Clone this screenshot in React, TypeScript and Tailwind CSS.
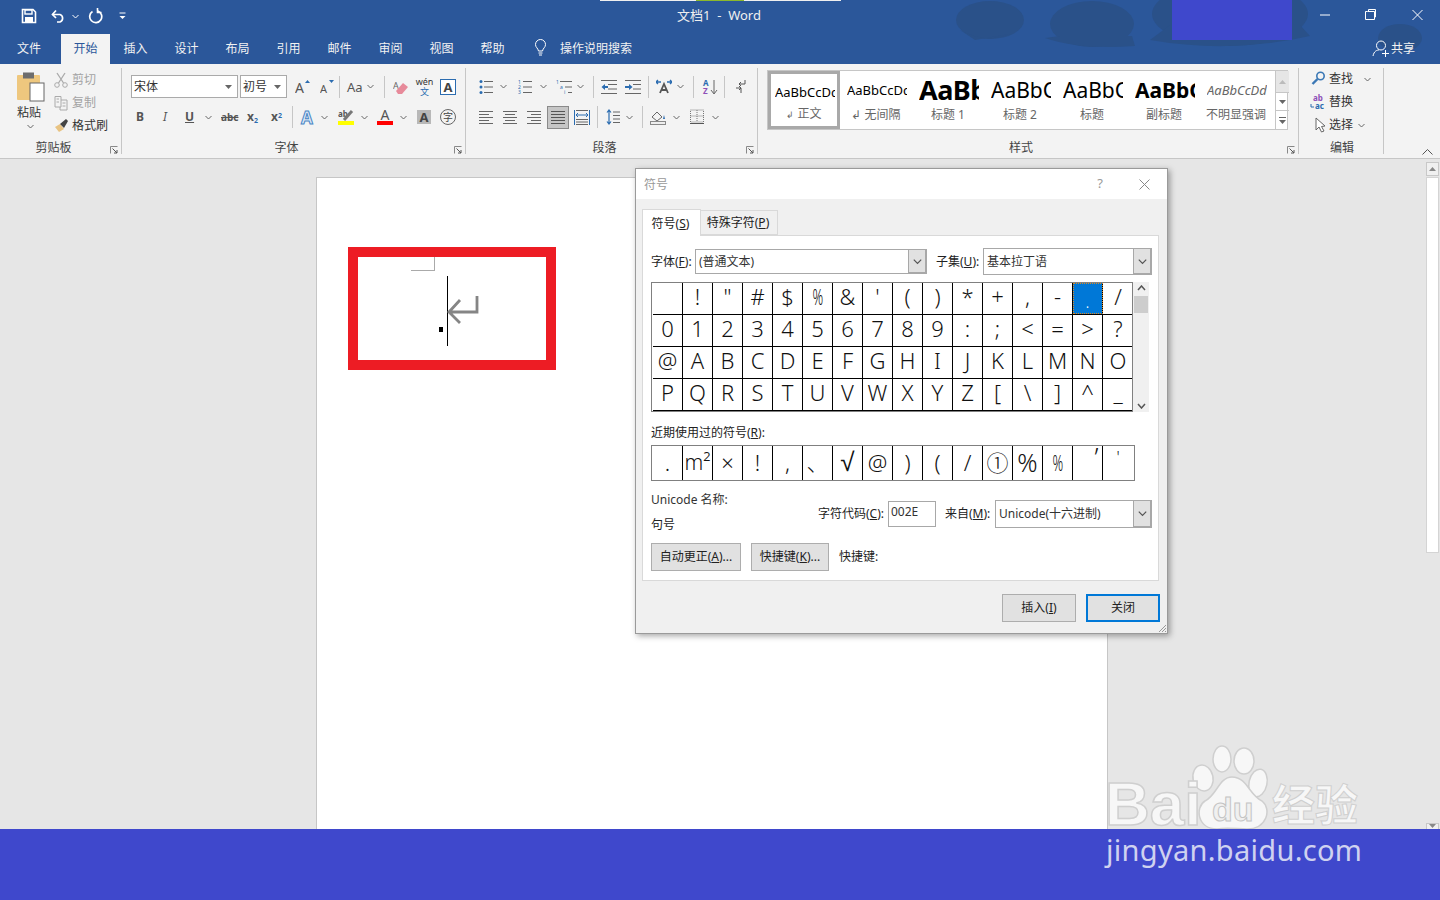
import React from "react";

const FONT = "font-['Noto_Sans','Noto_Sans_CJK_SC',sans-serif]";

function Chev({ className = "", color = "#666" }: { className?: string; color?: string }) {
  return (
    <svg width="7" height="5" viewBox="0 0 7 5" className={"shrink-0 " + className}>
      <path d="M0.5 1 L3.5 4 L6.5 1" fill="none" stroke={color} strokeWidth="1" />
    </svg>
  );
}
function Sep({ className = "", h = "h-[22px]" }: { className?: string; h?: string }) {
  return <div className={`w-px ${h} bg-[#c6c6c6] shrink-0 ${className}`} />;
}
function Launcher() {
  return (
    <svg width="8" height="8" viewBox="0 0 8 8" className="absolute right-[3px] bottom-[0px]">
      <path d="M0.5 7.5V0.5H7.5" fill="none" stroke="#888" />
      <path d="M2.5 2.5L7 7M7 4V7H4" fill="none" stroke="#555" />
    </svg>
  );
}
function Lines({ x1, x2, ys, color = "#666" }: { x1: number[]; x2: number[]; ys: number[]; color?: string }) {
  return (
    <>
      {ys.map((y, i) => (
        <path key={i} d={`M${x1[i % x1.length]} ${y}H${x2[i % x2.length]}`} stroke={color} strokeWidth="1" />
      ))}
    </>
  );
}
function Ico({ w, h = 16, className = "", children }: { w: number; h?: number; className?: string; children: React.ReactNode }) {
  return (
    <svg width={w} height={h} viewBox={`0 0 ${w} ${h}`} className={"shrink-0 " + className}>
      {children}
    </svg>
  );
}

const tabs = ["插入", "设计", "布局", "引用", "邮件", "审阅", "视图", "帮助"];

function TitleBar() {
  return (
    <div className="relative h-[64px] bg-[#2b579a] shrink-0 overflow-hidden text-white">
      <svg width="1440" height="64" className="absolute left-0 top-0">
        <g fill="#2a5189">
          <ellipse cx="990" cy="20" rx="34" ry="19" />
          <path d="M960 30 Q985 44 1010 34 L975 40Z" />
          <ellipse cx="1092" cy="24" rx="42" ry="23" />
          <path d="M1045 38 Q1080 50 1135 46 L1132 36 L1060 36Z" />
          <ellipse cx="1230" cy="14" rx="78" ry="32" />
          <path d="M1150 40 Q1230 54 1310 36 L1300 25 L1170 25Z" />
          <ellipse cx="1400" cy="38" rx="22" ry="14" />
        </g>
      </svg>
      <div className="absolute left-[600px] top-0 w-[241px] h-px bg-[#f0f0f0]" />
      <div className="absolute left-[696px] top-0 w-[48px] h-px bg-[#8cb82b]" />
      <div className="absolute left-[1172px] top-0 w-[120px] h-[40px] bg-[#3f48cc]" />

      <div className="relative h-[32px] flex items-center">
        <Ico w={16} className="ml-[21px]">
          <path d="M1.5 1.5H12L14.5 4V14.5H1.5Z" fill="none" stroke="#fff" strokeWidth="1.6" />
          <rect x="4" y="2" width="7" height="4" fill="none" stroke="#fff" strokeWidth="1.4" />
          <rect x="4" y="9" width="8" height="5" fill="#fff" />
        </Ico>
        <Ico w={15} className="ml-[14px]">
          <path d="M1.5 6.5 H9 A4 4 0 0 1 9 14 H6" fill="none" stroke="#fff" strokeWidth="1.7" />
          <path d="M5 2.5 L1.5 6.5 L5 10" fill="none" stroke="#fff" strokeWidth="1.7" />
        </Ico>
        <Chev className="ml-[6px]" color="#fff" />
        <Ico w={15} className="ml-[9px]">
          <path d="M4.5 3.5 A6 6 0 1 0 10 3" fill="none" stroke="#fff" strokeWidth="1.7" />
          <path d="M10.5 1 V5.5 H14.5" fill="none" stroke="#fff" strokeWidth="1.6" transform="translate(-1,-1)" />
        </Ico>
        <Ico w={7} h={8} className="ml-[16px]">
          <path d="M0.5 1H6.5" stroke="#fff" />
          <path d="M0.5 4H6.5L3.5 7Z" fill="#fff" />
        </Ico>
      </div>
      <div className={`absolute left-[677px] top-[7px] text-[13px] leading-[17px] text-[#f0f0f0] whitespace-pre ${FONT}`}>文档1  -  Word</div>
      <Ico w={16} className="absolute left-[1320px] top-[7px]"><path d="M0 8H10" stroke="#fff" /></Ico>
      <Ico w={16} className="absolute left-[1365px] top-[7px]">
        <path d="M2.5 5.5H9.5V13.5H0.5V5.5Z" fill="none" stroke="#fff" transform="translate(0,-1)" />
        <path d="M3.5 4.5V2.5H10.5V10H9" fill="none" stroke="#fff" />
      </Ico>
      <Ico w={16} className="absolute left-[1412px] top-[7px]"><path d="M0.5 3 L10.5 13 M10.5 3 L0.5 13" stroke="#fff" /></Ico>

      <div className={`relative h-[32px] flex items-end text-[12px] leading-[30px] text-[#f2f2f2] ${FONT}`}>
        <div className="w-[61px] h-[30px] text-center pr-[3px]">文件</div>
        <div className="w-[49px] h-[30px] text-center bg-[#f3f3f3] text-[#2b579a]">开始</div>
        {tabs.map((t) => (
          <div key={t} className="w-[51px] h-[30px] text-center">{t}</div>
        ))}
        <Ico w={16} h={18} className="ml-[15px] mb-[7px]">
          <path d="M5.5 12 C5 9 2.5 8.5 2.5 5.5 A5 5 0 0 1 12.5 5.5 C12.5 8.5 10 9 9.5 12 Z" fill="none" stroke="#fff" />
          <path d="M5.5 14H9.5M6 16H9" stroke="#fff" />
        </Ico>
        <div className="ml-[11px] w-[80px]">操作说明搜索</div>
        <Ico w={20} h={20} className="ml-[732px] mb-[5px]">
          <circle cx="9" cy="6.5" r="4.5" fill="none" stroke="#fff" />
          <path d="M1 17 C2 12 5 11 7 11" fill="none" stroke="#fff" />
          <path d="M10 14.5H17M13.5 11V18" stroke="#fff" />
        </Ico>
        <div className="w-[30px] ml-[-1px] h-[30px] whitespace-nowrap">共享</div>
      </div>
    </div>
  );
}

function Group({ w, label, launcher = true, labelClass = "", children }: { w: number; label: string; launcher?: boolean; labelClass?: string; children: React.ReactNode }) {
  return (
    <div style={{ width: w }} className="relative h-[86px] border-r border-[#c6c6c6] shrink-0 flex flex-col">
      <div className="flex-1 min-h-0">{children}</div>
      <div className={`h-[18px] mb-[-3px] text-center text-[12px] leading-[18px] text-[#444] ${labelClass}`}>{label}</div>
      {launcher && <Launcher />}
    </div>
  );
}

function SmallSelect({ w, text }: { w: number; text: string }) {
  return (
    <div style={{ width: w }} className="h-[23px] bg-white border border-[#aaa] flex items-center pl-[2px] pr-[5px] text-[12px] text-[#333] shrink-0">
      <span className="flex-1">{text}</span>
      <svg width="7" height="4" viewBox="0 0 7 4"><path d="M0 0H7L3.5 4Z" fill="#666" /></svg>
    </div>
  );
}

function Clipboard() {
  return (
    <Group w={122} label="剪贴板" labelClass="pr-[14px]">
      <div className="flex pt-[3px] pl-[16px] h-full">
        <div className="w-[28px] flex flex-col items-center">
          <Ico w={29} h={31}>
            <rect x="1" y="4" width="23" height="25" rx="1" fill="#eec77e" />
            <rect x="7" y="1.5" width="11" height="6" fill="#6d6d6d" />
            <rect x="14" y="12" width="14" height="18" fill="#fff" stroke="#666" />
          </Ico>
          <div className="mt-[3px] text-[12px] leading-[16px] text-[#333] whitespace-nowrap pr-[2px]">粘贴</div>
          <Chev className="mt-[3px]" />
        </div>
        <div className="ml-[10px] flex flex-col gap-[7px] pt-[1px] text-[12px] leading-[16px]">
          <div className="flex items-center text-[#a3a3a3] h-[16px]">
            <Ico w={14}><path d="M3 1L9.5 11M11 1L4.5 11" stroke="#aaa" strokeWidth="1.3" /><circle cx="3" cy="13" r="2.3" fill="none" stroke="#aaa" /><circle cx="11" cy="13" r="2.3" fill="none" stroke="#aaa" /></Ico>
            <span className="ml-[4px]">剪切</span>
          </div>
          <div className="flex items-center text-[#a3a3a3] h-[16px]">
            <Ico w={14}><path d="M1 1.5H7V12H1Z M7 5H13V15H6V12" fill="none" stroke="#aaa" /><path d="M2.5 4H5M2.5 7H5M8.5 8H11.5M8.5 11H11.5" stroke="#aaa" /></Ico>
            <span className="ml-[4px]">复制</span>
          </div>
          <div className="flex items-center text-[#333] h-[16px]">
            <Ico w={14}><path d="M1 9 L6 6 L10 11 L5 14 Z" fill="#e8c382" /><path d="M6 6 L12 1 L14 3 L10 10Z" fill="#444" /></Ico>
            <span className="ml-[4px]">格式刷</span>
          </div>
        </div>
      </div>
    </Group>
  );
}

function FontGroup() {
  return (
    <Group w={344} label="字体" labelClass="pr-[14px]">
      <div className="flex items-center h-[25px] mt-[6px]">
        <div className="ml-[9px]"><SmallSelect w={107} text="宋体" /></div>
        <div className="ml-[2px]"><SmallSelect w={47} text="初号" /></div>
        <Ico w={15} className="ml-[8px]"><text x="0" y="14" fontSize="14" fill="#555" fontFamily="Noto Sans">A</text><path d="M10 4L12.5 1L15 4Z" fill="#2b6cb0" /></Ico>
        <Ico w={14} className="ml-[10px]"><text x="0" y="14" fontSize="11" fill="#555" fontFamily="Noto Sans">A</text><path d="M9 1H14L11.5 4Z" fill="#2b6cb0" /></Ico>
        <Sep className="ml-[5px]" />
        <span className="ml-[7px] w-[15px] text-[13px] leading-[16px] text-[#555] whitespace-nowrap">Aa</span>
        <Chev className="ml-[5px]" />
        <Sep className="ml-[10px]" />
        <Ico w={16} className="ml-[8px]"><text x="0" y="10" fontSize="9" fill="#666" fontFamily="Noto Sans">A</text><path d="M3 12L10 4L15 8L9 15H5Z" fill="#e78a9a" /></Ico>
        <div className="ml-[7px] w-[17px] flex flex-col items-center text-[9px] leading-[10px]">
          <span className="text-[#333]">wén</span>
          <span className="text-[#2b6cb0]">文</span>
        </div>
        <div className="ml-[7px] w-[16px] h-[16px] border border-[#2b6cb0] text-[13px] leading-[14px] font-bold text-[#444] text-center bg-white">A</div>
      </div>
      <div className="flex items-center h-[24px] mt-[6px] text-[#555]">
        <span className="ml-[14px] w-[9px] text-[12px] font-bold leading-none">B</span>
        <span className="ml-[18px] w-[9px] text-[12px] italic leading-none">I</span>
        <span className="ml-[13px] w-[9px] text-[12px] font-bold underline leading-none">U</span>
        <Chev className="ml-[11px]" />
        <span className="ml-[9px] w-[16px] text-[10px] font-bold line-through leading-none">abc</span>
        <span className="ml-[10px] w-[11px] text-[12px] font-bold leading-none">x<sub className="text-[7px] text-[#2b6cb0]">2</sub></span>
        <span className="ml-[13px] w-[12px] text-[12px] font-bold leading-none">x<sup className="text-[7px] text-[#2b6cb0]">2</sup></span>
        <Sep className="ml-[9px]" />
        <span className="ml-[8px] w-[14px] text-[17px] font-bold leading-none text-[#dfeaf7] [-webkit-text-stroke:1px_#4a86c5]">A</span>
        <Chev className="ml-[6px]" />
        <div className="ml-[10px] w-[16px] flex flex-col items-center">
          <Ico w={16} h={12}><text x="0" y="8" fontSize="8" fill="#555" fontWeight="700" fontFamily="Noto Sans">ab</text><path d="M6 11L14 2" stroke="#777" strokeWidth="3" /></Ico>
          <div className="w-[16px] h-[4px] bg-[#ffff00]" />
        </div>
        <Chev className="ml-[7px]" />
        <div className="ml-[9px] w-[16px] flex flex-col items-center">
          <span className="text-[14px] leading-[12px] text-[#555]">A</span>
          <div className="w-[16px] h-[4px] bg-[#ff0000]" />
        </div>
        <Chev className="ml-[7px]" />
        <div className="ml-[10px] w-[14px] h-[14px] bg-[#b8b8b8] text-[13px] leading-[14px] font-bold text-center text-[#444]">A</div>
        <div className="ml-[9px] w-[16px] h-[16px] rounded-full border border-[#666] text-[10px] leading-[14px] text-center text-[#444]">字</div>
      </div>
    </Group>
  );
}

function ParagraphGroup() {
  const b = "#2b6cb0";
  return (
    <Group w={292} label="段落" labelClass="pr-[14px]">
      <div className="flex items-center h-[25px] mt-[6px]">
        <Ico w={14} className="ml-[13px]"><circle cx="2" cy="2.5" r="1.5" fill={b} /><circle cx="2" cy="8" r="1.5" fill={b} /><circle cx="2" cy="13.5" r="1.5" fill={b} /><Lines x1={[5]} x2={[14]} ys={[2.5, 8, 13.5]} /></Ico>
        <Chev className="ml-[7px]" />
        <Ico w={14} className="ml-[11px]"><text x="0" y="5" fontSize="5" fill={b}>1</text><text x="0" y="10" fontSize="5" fill={b}>2</text><text x="0" y="15" fontSize="5" fill={b}>3</text><Lines x1={[5]} x2={[14]} ys={[2.5, 8, 13.5]} /></Ico>
        <Chev className="ml-[8px]" />
        <Ico w={16} className="ml-[9px]"><text x="0" y="5" fontSize="5" fill={b}>1</text><text x="4" y="10" fontSize="5" fill={b}>a</text><text x="8" y="15" fontSize="5" fill={b}>i</text><Lines x1={[4, 9, 12]} x2={[16]} ys={[2.5, 8, 13.5]} /></Ico>
        <Chev className="ml-[5px]" />
        <Sep className="ml-[9px]" />
        <Ico w={16} className="ml-[7px]"><Lines x1={[0, 7, 7, 0]} x2={[16]} ys={[1.5, 5.5, 10, 14.5]} /><path d="M0.5 8L4 5V7H7V9H4V11Z" fill={b} /></Ico>
        <Ico w={16} className="ml-[8px]"><Lines x1={[0, 8, 8, 0]} x2={[16]} ys={[1.5, 5.5, 10, 14.5]} /><path d="M7.5 8L4 5V7H0V9H4V11Z" fill={b} /></Ico>
        <Sep className="ml-[7px]" />
        <Ico w={16} className="ml-[7px]"><path d="M4 14L8 5L12 14M5.5 11H10.5" fill="none" stroke="#555" strokeWidth="1.8" /><path d="M0 3H5M2 1L0 3L2 5M16 3H11M14 1L16 3L14 5" fill="none" stroke={b} strokeWidth="1.3" /></Ico>
        <Chev className="ml-[5px]" />
        <Sep className="ml-[9px]" />
        <Ico w={16} className="ml-[8px]"><text x="1" y="7" fontSize="8" fill={b} fontWeight="700">A</text><text x="1" y="15" fontSize="8" fill="#8e4fb8" fontWeight="700">Z</text><path d="M12 1V14M9 11L12 15L15 11" fill="none" stroke="#666" /></Ico>
        <Sep className="ml-[6px]" />
        <Ico w={11} className="ml-[10px]"><path d="M10 1V5H4M6 3L4 5L6 7M1 9H6M4 7L6 9L4 11M6 9V14" fill="none" stroke="#555" /></Ico>
      </div>
      <div className="flex items-center h-[24px] mt-[6px]">
        <Ico w={14} className="ml-[13px]"><Lines x1={[0]} x2={[14, 10]} ys={[2.5, 5.5, 8.5, 11.5, 14.5]} /></Ico>
        <Ico w={14} className="ml-[10px]"><Lines x1={[0, 2]} x2={[14, 12]} ys={[2.5, 5.5, 8.5, 11.5, 14.5]} /></Ico>
        <Ico w={14} className="ml-[10px]"><Lines x1={[0, 4]} x2={[14]} ys={[2.5, 5.5, 8.5, 11.5, 14.5]} /></Ico>
        <div className="ml-[6px] w-[22px] h-[23px] bg-[#c6c6c6] border border-[#8a8a8a] flex items-center justify-center">
          <Ico w={14}><Lines x1={[0]} x2={[14]} ys={[2.5, 5.5, 8.5, 11.5, 14.5]} color="#555" /></Ico>
        </div>
        <Ico w={16} className="ml-[5px]"><Lines x1={[2]} x2={[14]} ys={[1.5, 10.5, 13, 15.5]} /><path d="M0.5 1V16M15.5 1V16" stroke={b} /><path d="M2 6H14M2 6L4 4M2 6L4 8M14 6L12 4M14 6L12 8" fill="none" stroke={b} /></Ico>
        <Sep className="ml-[7px]" />
        <Ico w={14} className="ml-[8px]"><path d="M3 1V15M1 3.5L3 1L5 3.5M1 12.5L3 15L5 12.5" fill="none" stroke={b} strokeWidth="1.2" /><Lines x1={[7]} x2={[14]} ys={[3, 6.5, 10, 13.5]} /></Ico>
        <Chev className="ml-[6px]" />
        <Sep className="ml-[9px]" />
        <Ico w={16} className="ml-[7px]"><path d="M2 8L7 3L12 8L7 12Z" fill="none" stroke="#666" /><path d="M14 6L15 10H13Z" fill={b} /><rect x="0.5" y="12.5" width="15" height="3" fill="#eee" stroke="#888" /></Ico>
        <Chev className="ml-[7px]" />
        <Ico w={14} className="ml-[10px]"><path d="M0.5 1H13.5V13H0.5ZM7 1V13M0.5 7H13.5" fill="none" stroke="#777" strokeDasharray="1 1" /><path d="M0 14.5H14" stroke="#555" /></Ico>
        <Chev className="ml-[8px]" />
      </div>
    </Group>
  );
}

const styles = [
  { s: "AaBbCcDd", l: "↲ 无间隔", c: "text-[13px] text-black" },
  { s: "AaBb", l: "标题 1", c: "text-[27px] font-bold tracking-[-0.5px] text-black" },
  { s: "AaBbC", l: "标题 2", c: "text-[21px] text-black" },
  { s: "AaBbC", l: "标题", c: "text-[21px] text-black" },
  { s: "AaBbC", l: "副标题", c: "text-[21px] font-bold text-black" },
  { s: "AaBbCcDd", l: "不明显强调", c: "text-[13px] italic text-[#666]" },
];

function StylesGroup() {
  return (
    <Group w={541} label="样式" labelClass="pr-[14px]">
      <div className="ml-[9px] mt-[2px] w-[521px] h-[60px] bg-white border border-[#c6c6c6] flex">
        <div className="w-[72px] h-[58px] border-[3px] border-[#a9a9a9] flex flex-col items-center shrink-0">
          <div className="w-[60px] ml-[2px] overflow-hidden mt-[6px] h-[24px] text-[13px] leading-[24px] whitespace-nowrap text-black">AaBbCcDd</div>
          <div className="mt-[2px] text-[12px] leading-[16px] text-[#666] whitespace-nowrap"><span className="text-[9px] mr-[3px]">↲</span>正文</div>
        </div>
        {styles.map((s, i) => (
          <div key={i} className="w-[72px] flex flex-col items-center shrink-0">
            <div className={`w-[60px] ml-[2px] overflow-hidden mt-[4px] h-[30px] leading-[30px] whitespace-nowrap ${s.c}`}>{s.s}</div>
            <div className="mt-[2px] text-[12px] leading-[16px] text-[#666] whitespace-nowrap">{s.l}</div>
          </div>
        ))}
        <div className="w-[14px] ml-[3px] border-l border-[#c6c6c6] flex flex-col shrink-0">
          <div className="h-[21px] bg-[#e6e6e6] flex items-center justify-center"><svg width="7" height="4"><path d="M0 4H7L3.5 0Z" fill="#bbb" /></svg></div>
          <div className="h-[19px] border-y border-[#c6c6c6] flex items-center justify-center"><svg width="7" height="4"><path d="M0 0H7L3.5 4Z" fill="#666" /></svg></div>
          <div className="h-[18px] flex flex-col items-center justify-center gap-[2px]"><div className="w-[7px] h-px bg-[#666]" /><svg width="7" height="4"><path d="M0 0H7L3.5 4Z" fill="#666" /></svg></div>
        </div>
      </div>
    </Group>
  );
}

function EditGroup() {
  return (
    <Group w={85} label="编辑" launcher={false} labelClass="pl-[2px]">
      <div className="flex flex-col gap-[7px] pl-[12px] pt-[3px] text-[12px] leading-[16px] text-[#333]">
        <div className="flex items-center h-[16px]">
          <Ico w={14}><circle cx="9.5" cy="5" r="3.7" fill="none" stroke="#3b78b5" strokeWidth="1.6" /><path d="M6.5 8L1.5 13" stroke="#3b78b5" strokeWidth="2.4" /></Ico>
          <span className="ml-[4px]">查找</span>
          <Chev className="ml-[11px]" />
        </div>
        <div className="flex items-center h-[16px]">
          <Ico w={16} className="ml-[-1px]"><text x="3" y="7" fontSize="8" fontWeight="700" fill="#8e4fb8" fontFamily="Noto Sans">ab</text><text x="5" y="15" fontSize="8" fontWeight="700" fill="#2b6cb0" fontFamily="Noto Sans">ac</text><path d="M1 10V13H4" fill="none" stroke="#2b6cb0" /></Ico>
          <span className="ml-[3px]">替换</span>
        </div>
        <div className="flex items-center h-[16px]">
          <Ico w={14} className="ml-[3px]"><path d="M2 1L2 13L5 10L7.5 15L10 14L7.5 9.5L11 9Z" fill="#fff" stroke="#666" /></Ico>
          <span className="ml-[1px]">选择</span>
          <Chev className="ml-[5px]" />
        </div>
      </div>
    </Group>
  );
}

const Row = ({ chars, selected }: { chars: string[]; selected?: string }) => (
  <div className="flex h-[32px] border-b border-black">
    {chars.map((c, i) => (
      <div key={i} className={`w-[30px] shrink-0 flex items-center justify-center pb-[6px] border-r border-black last:border-r-0 text-[22px] font-light leading-none ${c === selected ? "bg-[#0078d7] text-white outline-1 outline-dotted -outline-offset-1 outline-[#e08a1e]" : "text-[#111]"}`}>
        {c === "." && selected ? <span className="text-[16px] mt-[12px]">.</span> : c === "%" ? <span className="inline-block scale-x-[0.6]">%</span> : c}
      </div>
    ))}
  </div>
);

const rows = [
  " !\"#$%&'()*+,-./".split(""),
  "0123456789:;<=>?".split(""),
  "@ABCDEFGHIJKLMNO".split(""),
  "PQRSTUVWXYZ[\\]^_".split(""),
];
const recent = [".", "m²", "×", "!", ",", "、", "√", "@", ")", "(", "/", "①", "%", "%", "’", "'"];

function U({ children }: { children: React.ReactNode }) {
  return <span className="underline">{children}</span>;
}

function DialogSelect({ w, h, text, arrowW = 18 }: { w: number; h: number; text: string; arrowW?: number }) {
  return (
    <div style={{ width: w, height: h }} className="bg-white border border-[#a8a8a8] flex items-center shrink-0">
      <span className="flex-1 pl-[3px] text-[12px] text-[#333] whitespace-nowrap overflow-hidden">{text}</span>
      <div style={{ width: arrowW }} className="h-full bg-[#e1e1e1] border-l border-[#a8a8a8] border-r border-b flex items-center justify-center">
        <Chev color="#555" className="scale-125" />
      </div>
    </div>
  );
}

function Btn({ w, primary, children }: { w: number; primary?: boolean; children: React.ReactNode }) {
  return (
    <div style={{ width: w }} className={`h-[28px] bg-[#e1e1e1] flex items-center justify-center text-[12px] text-[#222] whitespace-nowrap ${primary ? "border-2 border-[#0078d7]" : "border border-[#adadad]"}`}>
      {children}
    </div>
  );
}

function SymbolDialog() {
  return (
    <div className="absolute left-[635px] top-[168px] w-[533px] h-[466px] bg-[#f0f0f0] border border-[#9a9a9a] shadow-[2px_2px_6px_rgba(0,0,0,0.35)] flex flex-col text-[12px] text-[#222]">
      <div className="h-[30px] bg-white flex items-center shrink-0 relative">
        <span className="ml-[8px] mt-[1px] text-[12px] text-[#999]">符号</span>
        <span className="ml-auto mr-[36px] text-[13px] text-[#999]">?</span>
        <svg width="11" height="11" className="mr-[17px]"><path d="M0.5 0.5L10.5 10.5M10.5 0.5L0.5 10.5" stroke="#888" /></svg>
      </div>
      <div className="flex-1 px-[6px] pt-[10px] flex flex-col">
        <div className="flex items-end h-[27px] relative z-10">
          <div className="w-[59px] h-[27px] pt-[1px] pr-[2px] bg-white border border-[#d9d9d9] border-b-0 flex items-center justify-center">符号(<U>S</U>)</div>
          <div className="w-[77px] h-[25px] mb-[1px] pt-[1px] pr-[2px] bg-[#f0f0f0] border border-[#d9d9d9] border-l-0 flex items-center justify-center">特殊字符(<U>P</U>)</div>
        </div>
        <div className="w-[517px] h-[346px] mt-[-1px] bg-white border border-[#d9d9d9] pl-[8px] flex flex-col">
          <div className="flex items-center mt-[12px] h-[27px]">
            <span className="w-[44px] whitespace-nowrap">字体(<U>F</U>):</span>
            <DialogSelect w={232} h={25} text="(普通文本)" />
            <span className="ml-[9px] w-[47px] whitespace-nowrap">子集(<U>U</U>):</span>
            <DialogSelect w={169} h={27} text="基本拉丁语" />
          </div>
          <div className="flex mt-[7px]">
            <div className="w-[482px] h-[130px] border border-[#808080] pl-px overflow-hidden shrink-0">
              {rows.map((r, i) => <Row key={i} chars={r} selected="." />)}
            </div>
            <div className="w-[16px] h-[130px] bg-[#f0f0f0] flex flex-col items-center shrink-0">
              <svg width="9" height="6" className="mt-[3px]"><path d="M1 5L4.5 1L8 5" fill="none" stroke="#555" strokeWidth="1.5" /></svg>
              <div className="w-[14px] h-[17px] bg-[#cdcdcd] mt-[5px]" />
              <svg width="9" height="6" className="mt-auto mb-[3px]"><path d="M1 1L4.5 5L8 1" fill="none" stroke="#555" strokeWidth="1.5" /></svg>
            </div>
          </div>
          <div className="mt-[13px] h-[16px] leading-[16px]">近期使用过的符号(<U>R</U>):</div>
          <div className="mt-[4px] w-[484px] h-[36px] border border-[#808080] pl-px overflow-hidden flex">
            {recent.map((c, i) => (
              <div key={i} className={`w-[30px] shrink-0 flex items-center justify-center pb-[2px] border-r border-black last:border-r-0 leading-none font-light text-[#111] ${i === 6 ? "text-[26px] font-['Liberation_Sans',sans-serif]" : i === 14 ? "text-[26px] font-bold pb-[14px] pl-[18px]" : i === 15 ? "text-[16px] pb-[12px]" : i === 1 ? "text-[21px]" : i === 12 ? "text-[25px]" : "text-[22px]"}`}>
                {i === 13 ? <span className="inline-block scale-x-[0.6]">{c}</span> : c}
              </div>
            ))}
          </div>
          <div className="flex mt-[8px] h-[55px]">
            <div className="w-[167px] shrink-0 flex flex-col">
              <span className="h-[16px] leading-[16px] mt-[3px] text-[#333]">Unicode 名称:</span>
              <span className="h-[16px] leading-[16px] mt-[9px]">句号</span>
            </div>
            <div className="flex items-center h-[38px] mt-[6px]">
              <span className="whitespace-nowrap w-[70px]">字符代码(<U>C</U>):</span>
              <div className="w-[48px] h-[26px] border border-[#a8a8a8] pl-[2px] leading-[20px] text-[#333]">002E</div>
              <span className="ml-[9px] w-[50px] whitespace-nowrap">来自(<U>M</U>):</span>
              <DialogSelect w={157} h={28} text="Unicode(十六进制)" />
            </div>
          </div>
          <div className="flex items-center mt-[-1px]">
            <Btn w={90}>自动更正(<U>A</U>)...</Btn>
            <div className="w-[10px]" />
            <Btn w={78}>快捷键(<U>K</U>)...</Btn>
            <span className="ml-[10px]">快捷键:</span>
          </div>
        </div>
        <div className="flex justify-end mt-[13px] gap-[10px] mr-[1px]">
          <Btn w={74}>插入(<U>I</U>)</Btn>
          <Btn w={74} primary>关闭</Btn>
        </div>
      </div>
      <svg width="10" height="10" className="absolute right-0 bottom-0"><path d="M9 2L2 9M9 5L5 9M9 8L8 9" stroke="#999" /></svg>
    </div>
  );
}

function Watermark() {
  return (
    <div className={`absolute left-[1107px] top-[745px] w-[260px] h-[84px] overflow-hidden ${FONT}`}>
      <svg width="260" height="84" className="absolute left-0 top-0">
        <g fill="#f7f7f7" stroke="#cfcfcf" strokeWidth="1.5">
          <ellipse cx="115" cy="14" rx="9" ry="13" />
          <ellipse cx="137" cy="16" rx="10" ry="13" />
          <ellipse cx="96" cy="33" rx="10" ry="13" transform="rotate(-12 96 33)" />
          <ellipse cx="151" cy="38" rx="9" ry="14" transform="rotate(12 151 38)" />
          <path d="M125 32 C140 32 142 50 155 56 C165 64 160 84 140 84 C130 84 120 82 110 84 C90 84 88 62 98 56 C110 50 112 32 125 32Z" />
        </g>
      </svg>
      <div className="absolute left-[-2px] top-[28px] text-[62px] leading-[62px] font-bold text-[#f7f7f7] [-webkit-text-stroke:1.5px_#cfcfcf] font-['Liberation_Sans',sans-serif]">Bai</div>
      <div className="absolute left-[105px] top-[44px] text-[34px] leading-[40px] font-bold text-[#f0f0f0] [-webkit-text-stroke:1px_#c4c4c4] font-['Liberation_Sans',sans-serif]">du</div>
      <div className="absolute left-[165px] top-[36px] text-[43px] leading-[48px] font-bold text-[#f7f7f7] [-webkit-text-stroke:1px_#cfcfcf] whitespace-nowrap">经验</div>
    </div>
  );
}

export default function App() {
  return (
    <div className={`relative w-[1440px] h-[900px] overflow-hidden flex flex-col bg-[#e6e6e6] ${FONT}`}>
      <TitleBar />
      <div className="h-[95px] shrink-0 bg-[#f3f3f3] border-b border-[#c6c6c6] pt-[4px] flex relative">
        <Clipboard />
        <FontGroup />
        <ParagraphGroup />
        <StylesGroup />
        <EditGroup />
        <svg width="11" height="6" className="absolute left-[1422px] top-[85px]"><path d="M0.5 5.5L5.5 0.5L10.5 5.5" fill="none" stroke="#555" /></svg>
      </div>
      <div className="flex-1 min-h-0 flex overflow-hidden relative">
        <div className="flex-1 pt-[18px] pl-[316px]">
          <div className="relative w-[792px] h-[700px] bg-white border border-[#c6c6c6] border-b-0">
            <div className="absolute left-[31px] top-[69px] w-[208px] h-[123px] border-[10px] border-[#ed1c24]">
              <div className="absolute left-[53px] top-0 w-[24px] h-[14px] border-r border-b border-[#aaa]" />
              <div className="absolute left-[89px] top-[19px] w-px h-[70px] bg-black" />
              <div className="absolute left-[81px] top-[70px] w-[4px] h-[5px] bg-black" />
              <svg width="32" height="30" className="absolute left-[89px] top-[38px]">
                <path d="M30 1V17H2M13 5L2 17L13 28" fill="none" stroke="#858585" strokeWidth="2.8" />
              </svg>
            </div>
          </div>
        </div>
        <div className="w-[16px] shrink-0 flex flex-col items-center bg-[#e6e6e6] pt-[3px]">
          <div className="w-[13px] h-[14px] bg-[#f0f0f0] border border-[#c8c8c8] flex items-center justify-center"><svg width="7" height="4"><path d="M0 4H7L3.5 0Z" fill="#888" /></svg></div>
          <div className="w-[13px] h-[376px] mt-px bg-white border border-[#d4d4d4]" />
          <div className="mt-auto w-[13px] h-[6px] bg-[#f0f0f0] border border-[#c8c8c8] border-b-0 flex justify-center"><svg width="7" height="4"><path d="M0 0H7L3.5 4Z" fill="#888" /></svg></div>
        </div>
      </div>
      <div className="h-[71px] shrink-0 bg-[#3f48cc] pl-[1106px] pt-[1px] text-[29px] leading-[40px] text-[#cfd2f0] whitespace-nowrap tracking-[0.3px]">jingyan.baidu.com</div>
      <SymbolDialog />
      <Watermark />
    </div>
  );
}
